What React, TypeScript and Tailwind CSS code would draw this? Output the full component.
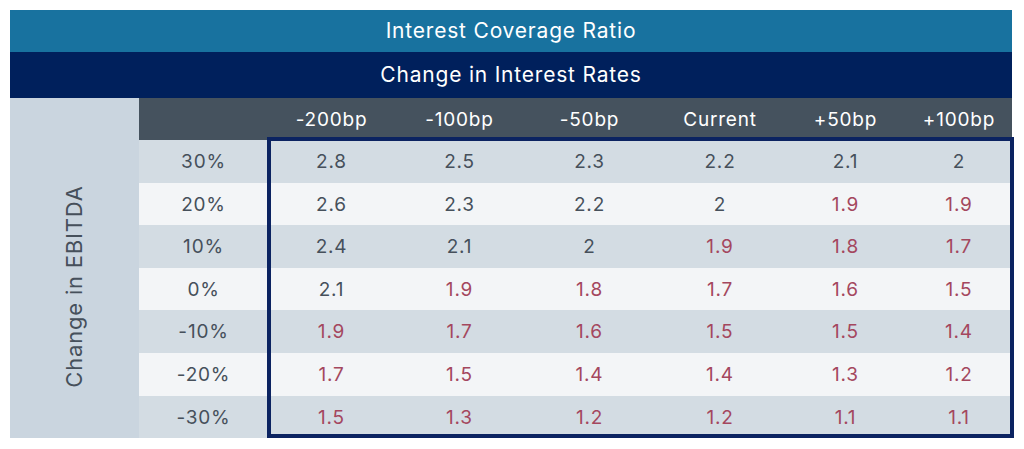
import React from 'react';

const columns = ['-200bp', '-100bp', '-50bp', 'Current', '+50bp', '+100bp'];

// values under 2.0x are shown in red
const rows: { label: string; values: number[] }[] = [
  { label: '30%', values: [2.8, 2.5, 2.3, 2.2, 2.1, 2] },
  { label: '20%', values: [2.6, 2.3, 2.2, 2, 1.9, 1.9] },
  { label: '10%', values: [2.4, 2.1, 2, 1.9, 1.8, 1.7] },
  { label: '0%', values: [2.1, 1.9, 1.8, 1.7, 1.6, 1.5] },
  { label: '-10%', values: [1.9, 1.7, 1.6, 1.5, 1.5, 1.4] },
  { label: '-20%', values: [1.7, 1.5, 1.4, 1.4, 1.3, 1.2] },
  { label: '-30%', values: [1.5, 1.3, 1.2, 1.2, 1.1, 1.1] },
];

const gridCols = 'grid grid-cols-[129px_127px_129px_131px_130px_121px_106px]';

const App: React.FC = () => {
  return (
    <div
      className="w-[1024px] h-[449px] bg-white pt-[10px] pl-[10px] text-[19px] tracking-[0.8px]"
      style={{ fontFamily: 'Inter, "Liberation Sans", sans-serif' }}
    >
      <div className="relative w-[1002px]">
        <div className="h-[42px] bg-[#18729f] text-white text-[21px] flex items-center justify-center">
          Interest Coverage Ratio
        </div>
        <div className="h-[46px] bg-[#00205c] text-white text-[21px] flex items-center justify-center">
          Change in Interest Rates
        </div>

        <div className="flex">
          {/* vertical axis label */}
          <div className="w-[129px] bg-[#cad5df] flex items-center justify-center">
            <span className="-rotate-90 whitespace-nowrap text-[#46505b] text-[22px] mt-[36px]">
              Change in EBITDA
            </span>
          </div>

          <div className="flex-1 flex flex-col">
            <div className={`${gridCols} h-[42px] bg-[#45525e] text-white`}>
              <div />
              {columns.map((c) => (
                <div key={c} className="flex items-center justify-center pt-[2px]">
                  {c}
                </div>
              ))}
            </div>

            {rows.map((row, i) => (
              <div
                key={row.label}
                className={`${gridCols} h-[42.6px] ${i % 2 === 0 ? 'bg-[#d3dce3]' : 'bg-[#f3f5f7]'}`}
              >
                <div className="flex items-center justify-center text-[#46505b] pt-[2px]">{row.label}</div>
                {row.values.map((v, j) => (
                  <div
                    key={j}
                    className={`flex items-center justify-center pt-[2px] ${v < 2 ? 'text-[#a4475e]' : 'text-[#46505b]'}`}
                  >
                    {v}
                  </div>
                ))}
              </div>
            ))}
          </div>
        </div>

        {/* highlight box around the sensitivity values */}
        <div className="absolute left-[257px] top-[127px] w-[747px] h-[301px] border-[4px] border-[#0b2361] pointer-events-none" />
      </div>
    </div>
  );
};

export default App;
